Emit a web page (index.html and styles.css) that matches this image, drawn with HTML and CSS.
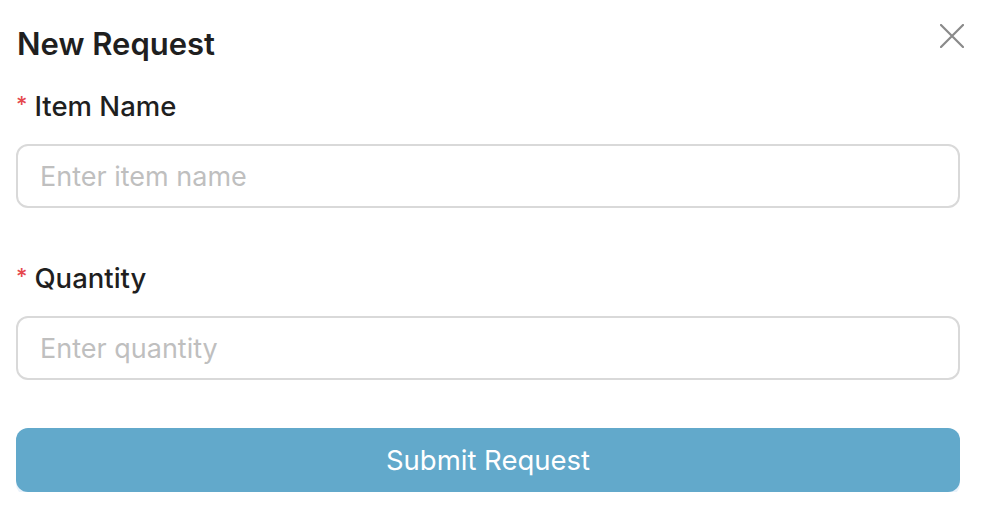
FILE: index.html
```html
<!DOCTYPE html>
<html lang="en">
<head>
<meta charset="utf-8">
<title>New Request</title>
<link rel="stylesheet" href="styles.css">
</head>
<body>
<div class="modal">
  <div class="modal-header">
    <h2 class="modal-title">New Request</h2>
    <button class="close-btn" aria-label="Close">
      <svg width="24" height="24" viewBox="0 0 24 24"><path d="M1 1 L23 23 M23 1 L1 23" stroke="#8a8a8a" stroke-width="2.2" stroke-linecap="round" fill="none"/></svg>
    </button>
  </div>
  <form class="form">
    <div class="form-item">
      <label class="label"><span class="req">*</span>Item Name</label>
      <input class="input" type="text" placeholder="Enter item name">
    </div>
    <div class="form-item form-item-last">
      <label class="label"><span class="req">*</span>Quantity</label>
      <input class="input" type="text" placeholder="Enter quantity">
    </div>
    <button type="button" class="submit">Submit Request</button>
  </form>
</div>
</body>
</html>
```
FILE: styles.css
```css
* { box-sizing: border-box; }
html, body { margin: 0; background: #fff; }
body {
  font-family: Inter, "Noto Sans", sans-serif;
  color: #1f1f1f;
}
.modal {
  padding: 20px 28px 0 16px;
}
.modal-header {
  display: flex;
  justify-content: space-between;
  align-items: flex-start;
  height: 66px;
}
.modal-title {
  margin: 0;
  padding-left: 1px;
  font-size: 31px;
  font-weight: 600;
  line-height: 48px;
  color: #1f1f1f;
}
.close-btn {
  border: 0;
  background: none;
  padding: 0;
  margin-top: 4px;
  width: 24px;
  height: 24px;
  cursor: pointer;
}
.form-item {
  margin-bottom: 50px;
}
.form-item-last { margin-bottom: 48px; }
.label {
  display: block;
  font-size: 27.5px;
  font-weight: 500;
  line-height: 36px;
  margin-bottom: 20px;
  color: #1f1f1f;
}
.req {
  color: #e5484d;
  font-size: 22px;
  margin-right: 7px;
  padding-left: 0;
  vertical-align: 4px;
}
.input {
  display: block;
  width: 944px;
  height: 64px;
  border: 2px solid #d9d9d9;
  border-radius: 12px;
  padding: 0 22px;
  font-family: inherit;
  font-size: 27px;
  color: #1f1f1f;
  outline: none;
}
.input::placeholder { color: #bfbfbf; }
.submit {
  display: block;
  width: 944px;
  height: 64px;
  border: 0;
  border-radius: 12px;
  background: #62a9cb;
  color: #fff;
  font-family: inherit;
  font-size: 27.5px;
  box-shadow: 0 4px 0 #e9f2fb;
  cursor: pointer;
}
```
